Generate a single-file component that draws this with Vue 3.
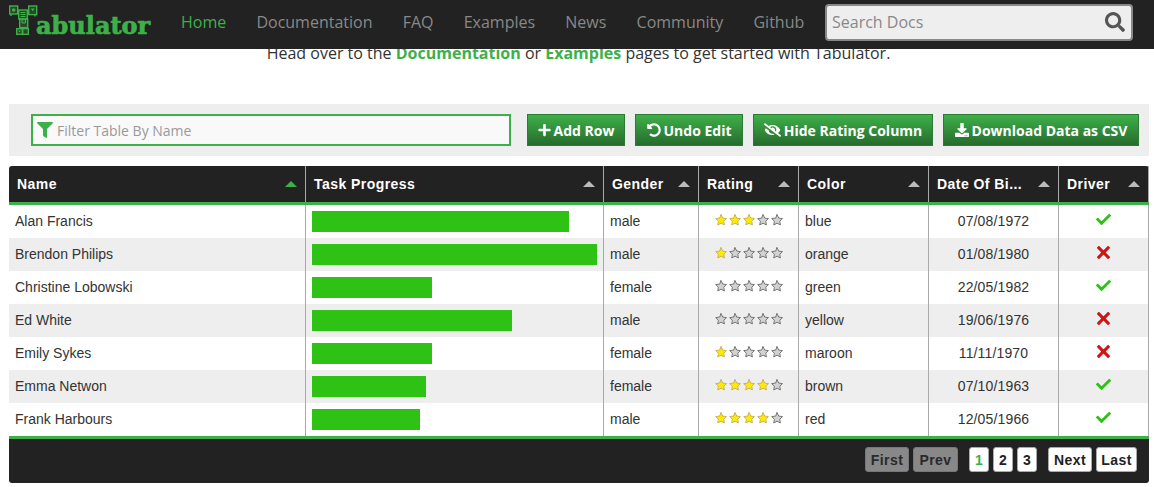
<script setup>
const navLinks = ['Home', 'Documentation', 'FAQ', 'Examples', 'News', 'Community', 'Github']

const columns = [
  { title: 'Name', sorted: true },
  { title: 'Task Progress' },
  { title: 'Gender' },
  { title: 'Rating' },
  { title: 'Color' },
  { title: 'Date Of Bi...' },
  { title: 'Driver' },
]

const rows = [
  { name: 'Alan Francis', progress: 90, gender: 'male', rating: 3, color: 'blue', dob: '07/08/1972', driver: true },
  { name: 'Brendon Philips', progress: 100, gender: 'male', rating: 1, color: 'orange', dob: '01/08/1980', driver: false },
  { name: 'Christine Lobowski', progress: 42, gender: 'female', rating: 0, color: 'green', dob: '22/05/1982', driver: true },
  { name: 'Ed White', progress: 70, gender: 'male', rating: 0, color: 'yellow', dob: '19/06/1976', driver: false },
  { name: 'Emily Sykes', progress: 42, gender: 'female', rating: 1, color: 'maroon', dob: '11/11/1970', driver: false },
  { name: 'Emma Netwon', progress: 40, gender: 'female', rating: 4, color: 'brown', dob: '07/10/1963', driver: true },
  { name: 'Frank Harbours', progress: 38, gender: 'male', rating: 4, color: 'red', dob: '12/05/1966', driver: true },
]

const starPoints = '259.216,29.942 330.27,173.919 489.16,197.007 374.185,309.08 401.33,467.31 259.216,392.612 117.104,467.31 144.25,309.08 29.274,197.007 188.165,173.919'
</script>

<template>
  <header class="nav">
    <a class="logo">
      <svg class="logo-mark" width="29" height="30" viewBox="0 0 29 30" fill="rgba(62,176,73,0.25)" stroke="#3eb049" stroke-width="1.4">
        <rect x="0.7" y="1" width="8" height="8" />
        <circle cx="4.7" cy="5" r="1.8" fill="#3eb049" stroke="none" />
        <path d="M2 9v2" />
        <rect x="9.7" y="5" width="8.6" height="9" />
        <path d="M11.5 7.5h5M11.5 9.5h5M11.5 11.5h5" stroke-width="1" />
        <rect x="19.7" y="1" width="8" height="8.6" />
        <path d="M21.8 3.6h3.8l-1.9 2.6z" fill="#3eb049" stroke="none" />
        <path d="M26 9.6v2" />
        <rect x="10.7" y="14" width="8" height="8.6" />
        <path d="M13 14v4h3.5v-4" stroke-width="1" />
        <rect x="7.7" y="23.7" width="5.6" height="5.6" />
        <path d="M9.2 25.6h2.6l-1.3 1.9z" fill="#3eb049" stroke="none" />
        <rect x="13.7" y="23.7" width="5.6" height="5.6" />
      </svg>
      <span class="logo-text">abulator</span>
    </a>
    <nav class="nav-links">
      <a v-for="(link, i) in navLinks" :key="link" :class="{ active: i === 0 }">{{ link }}</a>
    </nav>
    <div class="search">
      <span class="search-text">Search Docs</span>
      <svg width="20" height="20" viewBox="0 0 512 512" fill="#555"><path d="M505 442.7L405.3 343c-4.5-4.5-10.6-7-17-7H372c27.6-35.3 44-79.7 44-128C416 93.1 322.9 0 208 0S0 93.1 0 208s93.1 208 208 208c48.3 0 92.7-16.4 128-44v16.3c0 6.4 2.5 12.5 7 17l99.7 99.7c9.4 9.4 24.6 9.4 33.9 0l28.3-28.3c9.4-9.4 9.4-24.6.1-34zM208 336c-70.7 0-128-57.2-128-128 0-70.7 57.2-128 128-128 70.7 0 128 57.2 128 128 0 70.7-57.2 128-128 128z" /></svg>
    </div>
  </header>

  <main class="page">
    <p class="intro">
      Head over to the <a>Documentation</a> or <a>Examples</a> pages to get started with Tabulator.
    </p>

    <div class="toolbar">
      <div class="filter">
        <svg width="16" height="16" viewBox="0 0 512 512" fill="#3eb049"><path d="M487.976 0H24.028C2.71 0-8.047 25.866 7.058 40.971L192 225.941V432c0 7.831 3.821 15.17 10.237 19.662l80 55.98C298.02 518.69 320 507.493 320 487.98V225.941l184.947-184.97C520.021 25.896 509.338 0 487.976 0z" /></svg>
        <span>Filter Table By Name</span>
      </div>
      <button class="btn" type="button">
        <svg width="13" height="14" viewBox="0 0 448 512" fill="#fff"><path d="M416 208H272V64c0-17.67-14.33-32-32-32h-32c-17.67 0-32 14.33-32 32v144H32c-17.67 0-32 14.33-32 32v32c0 17.67 14.33 32 32 32h144v144c0 17.67 14.33 32 32 32h32c17.67 0 32-14.33 32-32V304h144c17.67 0 32-14.33 32-32v-32c0-17.67-14.33-32-32-32z" /></svg>
        Add Row
      </button>
      <button class="btn" type="button">
        <svg width="14" height="14" viewBox="0 0 512 512" fill="#fff"><path d="M255.545 8c-66.269.119-126.438 26.233-170.86 68.685L48.971 40.971C33.851 25.851 8 36.559 8 57.941V192c0 13.255 10.745 24 24 24h134.059c21.382 0 32.09-25.851 16.971-40.971l-41.75-41.75c30.864-28.899 70.801-44.907 113.23-45.273 92.398-.798 170.283 73.977 169.484 169.442C423.236 348.009 349.816 424 256 424c-41.127 0-79.997-14.678-110.63-41.556-4.743-4.161-11.906-3.908-16.368.553L89.34 422.659c-4.872 4.872-4.631 12.815.482 17.433C133.798 479.813 192.074 504 256 504c136.966 0 247.999-111.033 248-247.998C504.001 119.193 392.354 7.755 255.545 8z" /></svg>
        Undo Edit
      </button>
      <button class="btn" type="button">
        <svg width="17" height="14" viewBox="0 0 640 512" fill="#fff"><path d="M320 400c-75.85 0-137.25-58.71-142.9-133.11L72.2 185.82c-13.79 17.3-26.48 35.59-36.72 55.59a32.35 32.35 0 0 0 0 29.19C89.71 376.41 197.07 448 320 448c26.91 0 52.87-4 77.89-10.46L346 397.39a144.13 144.13 0 0 1-26 2.61zm313.82 58.1l-110.55-85.44a331.25 331.25 0 0 0 81.25-102.07 32.35 32.35 0 0 0 0-29.19C550.29 135.59 442.93 64 320 64a308.15 308.15 0 0 0-147.32 37.7L45.46 3.37A16 16 0 0 0 23 6.18L3.37 31.45A16 16 0 0 0 6.18 53.9l588.36 454.73a16 16 0 0 0 22.46-2.81l19.64-25.27a16 16 0 0 0-2.82-22.45zm-183.72-142l-39.3-30.38A94.75 94.75 0 0 0 416 256a94.76 94.76 0 0 0-121.31-92.21A47.65 47.65 0 0 1 304 192a46.64 46.64 0 0 1-1.54 10l-73.61-56.89A142.31 142.31 0 0 1 320 112a143.92 143.92 0 0 1 144 144c0 21.63-5.29 41.79-13.9 60.11z" /></svg>
        Hide Rating Column
      </button>
      <button class="btn" type="button">
        <svg width="14" height="14" viewBox="0 0 512 512" fill="#fff"><path d="M216 0h80c13.3 0 24 10.7 24 24v168h87.7c17.8 0 26.7 21.5 14.1 34.1L269.7 378.3c-7.5 7.5-19.8 7.5-27.3 0L90.1 226.1c-12.6-12.6-3.7-34.1 14.1-34.1H192V24c0-13.3 10.7-24 24-24zm296 376v112c0 13.3-10.7 24-24 24H24c-13.3 0-24-10.7-24-24V376c0-13.3 10.7-24 24-24h146.7l49 49c20.1 20.1 52.5 20.1 72.6 0l49-49H488c13.3 0 24 10.7 24 24zm-124 88c0-11-9-20-20-20s-20 9-20 20 9 20 20 20 20-9 20-20zm64 0c0-11-9-20-20-20s-20 9-20 20 9 20 20 20 20-9 20-20z" /></svg>
        Download Data as CSV
      </button>
    </div>

    <div class="table">
      <div class="table-head">
        <div v-for="col in columns" :key="col.title" class="head-cell">
          <span>{{ col.title }}</span>
          <i class="arrow" :class="{ sorted: col.sorted }"></i>
        </div>
      </div>

      <div v-for="row in rows" :key="row.name" class="row">
        <div class="cell">{{ row.name }}</div>
        <div class="cell">
          <div class="bar-track">
            <div class="bar" :style="{ width: row.progress + '%' }"></div>
          </div>
        </div>
        <div class="cell">{{ row.gender }}</div>
        <div class="cell center stars">
          <svg v-for="n in 5" :key="n" width="12" height="12" viewBox="0 0 512 512">
            <polygon
              :fill="n <= row.rating ? '#FFEA00' : '#D2D2D2'"
              :stroke="n <= row.rating ? '#C1AB60' : '#686868'"
              stroke-width="37.6152"
              stroke-linecap="round"
              stroke-linejoin="round"
              :points="starPoints"
            />
          </svg>
        </div>
        <div class="cell">{{ row.color }}</div>
        <div class="cell center date">{{ row.dob }}</div>
        <div class="cell center driver">
          <svg v-if="row.driver" width="15" height="15" viewBox="0 0 24 24" fill="#2DC214"><path d="M21.652,3.211c-0.293-0.295-0.77-0.295-1.061,0L9.41,14.34c-0.293,0.297-0.771,0.297-1.062,0L3.449,9.351C3.304,9.203,3.114,9.13,2.923,9.129C2.73,9.128,2.534,9.201,2.387,9.351l-2.165,1.946C0.078,11.445,0,11.63,0,11.823c0,0.194,0.078,0.397,0.223,0.544l4.94,5.184c0.292,0.296,0.771,0.776,1.062,1.07l2.124,2.141c0.292,0.293,0.769,0.293,1.062,0l14.366-14.34c0.293-0.294,0.293-0.777,0-1.071L21.652,3.211z" /></svg>
          <svg v-else width="15" height="15" viewBox="0 0 24 24" fill="#CE1515"><path d="M22.245,4.015c0.313,0.313,0.313,0.826,0,1.139l-6.276,6.27c-0.313,0.312-0.313,0.826,0,1.14l6.273,6.272c0.313,0.313,0.313,0.826,0,1.14l-2.285,2.277c-0.314,0.312-0.828,0.312-1.142,0l-6.271-6.271c-0.313-0.313-0.828-0.313-1.141,0l-6.276,6.267c-0.313,0.313-0.828,0.313-1.141,0l-2.282-2.28c-0.313-0.313-0.313-0.826,0-1.14l6.278-6.269c0.313-0.312,0.313-0.826,0-1.14L1.709,5.147c-0.314-0.313-0.314-0.827,0-1.14l2.284-2.278C4.308,1.417,4.821,1.417,5.135,1.73L11.405,8c0.314,0.314,0.828,0.314,1.141,0.001l6.276-6.267c0.312-0.312,0.826-0.312,1.141,0L22.245,4.015z" /></svg>
        </div>
      </div>

      <div class="table-foot">
        <button class="page-btn disabled first" type="button">First</button>
        <button class="page-btn disabled prev" type="button">Prev</button>
        <div class="pages">
          <button class="page-btn num current" type="button">1</button>
          <button class="page-btn num" type="button">2</button>
          <button class="page-btn num" type="button">3</button>
        </div>
        <button class="page-btn next" type="button">Next</button>
        <button class="page-btn last" type="button">Last</button>
      </div>
    </div>
  </main>
</template>

<style>
html,
body {
  margin: 0;
  background: #fff;
  overflow: hidden;
}
</style>

<style scoped>
.nav {
  position: fixed;
  top: 0;
  left: 0;
  right: 0;
  z-index: 10;
  height: 49px;
  display: flex;
  align-items: center;
  background: #222;
  font-family: 'Open Sans', sans-serif;
}
.logo {
  position: relative;
  width: 181px;
  height: 49px;
  flex: none;
}
.logo-mark {
  position: absolute;
  left: 9px;
  top: 5px;
}
.logo-text {
  position: absolute;
  left: 36px;
  top: 8px;
  font-family: 'DejaVu Serif', serif;
  font-weight: 700;
  font-size: 24px;
  line-height: 36px;
  color: #3eb049;
  -webkit-text-stroke: 0.7px #3eb049;
}
.nav-links {
  display: flex;
  gap: 30.2px;
  margin-bottom: 6px;
  font-size: 16px;
  color: #888;
}
.nav-links .active {
  color: #3eb049;
}
.search {
  box-sizing: border-box;
  width: 308px;
  height: 37px;
  margin-left: auto;
  margin-right: 21px;
  margin-bottom: 4px;
  padding: 0 6px 2px 5px;
  display: flex;
  align-items: center;
  justify-content: space-between;
  background: #eee;
  border: 2px solid #888;
  border-radius: 4px;
  font-size: 16px;
  color: #888;
}

.page {
  padding: 43px 5px 4px 9px;
  font-family: 'Liberation Sans', Arial, sans-serif;
}
.intro {
  margin: 0 0 40px;
  padding-right: 1px;
  height: 21px;
  font-family: 'Open Sans', sans-serif;
  font-size: 16px;
  line-height: 21px;
  text-align: center;
  color: #333;
}
.intro a {
  color: #3eb049;
  font-weight: 700;
}

.toolbar {
  height: 52px;
  box-sizing: border-box;
  padding: 10px 10px 10px 22px;
  display: grid;
  grid-template-columns: 486px 98px 108px 180px 196px;
  gap: 10px;
  background: #eee;
  margin-bottom: 10px;
  font-family: 'Open Sans', sans-serif;
}
.filter {
  box-sizing: border-box;
  width: 480px;
  height: 32px;
  padding: 0 4px;
  display: flex;
  align-items: center;
  gap: 4px;
  background: #f9f9f9;
  border: 2px solid #3eb049;
  font-size: 14px;
  color: #999;
}
.btn {
  box-sizing: border-box;
  height: 32px;
  padding: 0;
  display: flex;
  align-items: center;
  justify-content: center;
  gap: 3px;
  border: 1px solid #2d7a35;
  background: linear-gradient(to bottom, #3eb049, #266c2d);
  color: #fff;
  font-family: inherit;
  font-size: 14px;
  font-weight: 700;
  white-space: nowrap;
}

.table {
  font-size: 14px;
  color: #333;
}
.table-head,
.row {
  display: grid;
  grid-template-columns: 297px 298px 95px 100px 130px 130px 90px;
}
.table-head {
  height: 39px;
  box-sizing: border-box;
  border-bottom: 3px solid #3eb049;
  background: #222;
  border-radius: 3px 3px 0 0;
  color: #fff;
  font-weight: 700;
  letter-spacing: 0.45px;
}
.head-cell {
  display: flex;
  align-items: center;
  justify-content: space-between;
  padding: 0 8px;
  border-right: 1px solid #aaa;
}
.arrow {
  width: 0;
  height: 0;
  border-left: 6px solid transparent;
  border-right: 6px solid transparent;
  border-bottom: 6px solid #bbb;
}
.arrow.sorted {
  border-bottom-color: #3eb049;
}
.row {
  height: 33px;
  background: #fff;
}
.row:nth-child(odd) {
  background: #eee;
}
.cell {
  box-sizing: border-box;
  display: flex;
  align-items: center;
  padding: 0 6px 2px;
  border-right: 1px solid #aaa;
}
.cell.center {
  justify-content: center;
}
.cell.date {
  letter-spacing: 0.15px;
}
.cell.stars {
  gap: 2px;
  padding-bottom: 3px;
}
.cell.driver {
  padding-bottom: 5px;
}
.bar-track {
  width: 100%;
  margin-bottom: -2px;
}
.bar {
  height: 21px;
  background: #2dc214;
}
.table-foot {
  box-sizing: border-box;
  height: 47px;
  padding: 8px 12px 0 0;
  display: flex;
  justify-content: flex-end;
  align-items: flex-start;
  gap: 4px;
  background: #222;
  border-top: 3px solid #3eb049;
  border-radius: 0 0 3px 3px;
}
.pages {
  display: flex;
  gap: 4px;
  margin: 0 7px;
}
.page-btn {
  box-sizing: border-box;
  height: 25px;
  padding: 0;
  background: #fff;
  border: 1px solid #aaa;
  border-radius: 3px;
  color: #222;
  font-family: inherit;
  font-size: 14px;
  font-weight: 700;
  letter-spacing: 0.45px;
}
.first,
.next {
  width: 44px;
}
.prev {
  width: 45px;
}
.num {
  width: 20px;
}
.last {
  width: 41px;
}
.page-btn.disabled {
  background: #888;
  border-color: #777;
  color: #2a2a2a;
}
.page-btn.current {
  color: #3eb049;
}
</style>
